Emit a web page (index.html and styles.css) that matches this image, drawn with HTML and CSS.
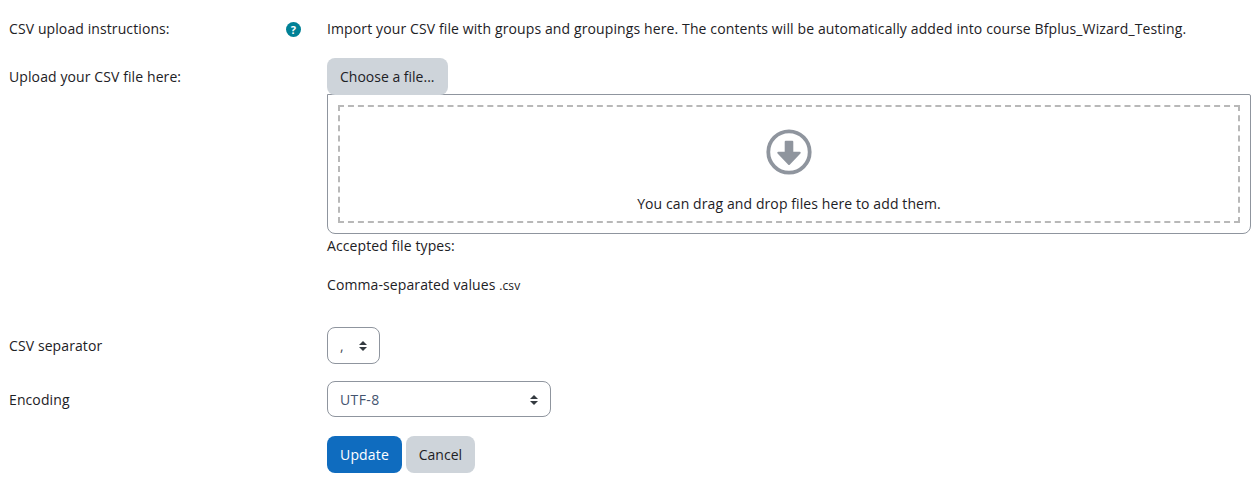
FILE: index.html
```html
<!DOCTYPE html>
<html>

<head>
    <title>Import groups</title>
    <link rel="stylesheet" href="styles.css">
</head>

<body>
    <form class="mform">
        <!-- CSV instructions -->
        <div class="form-row row-instructions">
            <div class="form-label">
                <span>CSV upload instructions:</span>
                <span class="help-icon">?</span>
            </div>
            <div class="form-field">Import your CSV file with groups and groupings here. The contents will be automatically added into course Bfplus_Wizard_Testing.</div>
        </div>

        <!-- File picker -->
        <div class="form-row row-file">
            <div class="form-label"><span>Upload your CSV file here:</span></div>
            <div class="form-field">
                <button type="button" class="btn btn-secondary">Choose a file...</button>
                <div class="dropzone">
                    <div class="dropzone-inner">
                        <svg class="drop-icon" width="46" height="46" viewBox="0 0 46 46">
                            <circle cx="23" cy="23" r="20.7" fill="none" stroke="#8f959e" stroke-width="3.8"></circle>
                            <path d="M19.7 12.7h6.6v11h7.4L23 35 12.3 23.7h7.4z" fill="#8f959e" stroke="#8f959e" stroke-width="2" stroke-linejoin="round"></path>
                        </svg>
                        <div class="drop-text">You can drag and drop files here to add them.</div>
                    </div>
                </div>
                <div class="accepted">Accepted file types:</div>
                <div class="types">Comma-separated values <small>.csv</small></div>
            </div>
        </div>

        <!-- Options -->
        <div class="form-row row-select">
            <div class="form-label"><span>CSV separator</span></div>
            <div class="form-field"><div class="select select-small">,</div></div>
        </div>
        <div class="form-row row-select">
            <div class="form-label"><span>Encoding</span></div>
            <div class="form-field"><div class="select select-wide">UTF-8</div></div>
        </div>

        <div class="form-row row-buttons">
            <div class="form-label"></div>
            <div class="form-field">
                <button type="button" class="btn btn-primary">Update</button>
                <button type="button" class="btn btn-secondary">Cancel</button>
            </div>
        </div>
    </form>
</body>

</html>
```

FILE: styles.css
```css
/* Page */
body {
    margin: 0;
    background-color: #fff;
    color: #1d2125;
    font-family: "Open Sans", "Liberation Sans", sans-serif;
    font-size: 14px;
    line-height: 21px;
    letter-spacing: 0.1px;
}
.mform {
    padding: 18px 6px 0 9px;
}

/* Form rows */
.form-row {
    display: flex;
}
.form-label {
    width: 318px;
    flex-shrink: 0;
    display: flex;
    justify-content: space-between;
    align-items: flex-start;
    padding-right: 26px;
    box-sizing: border-box;
}
.form-field {
    flex: 1;
}
.row-instructions {
    height: 40px;
}
.row-instructions .form-field {
    letter-spacing: 0.115px;
}
.row-file {
    height: 269px;
}
.row-file .form-label {
    padding-top: 8px;
}
.row-select {
    height: 54px;
}
.row-select .form-label {
    padding-top: 8px;
}
.row-buttons {
    margin-top: 1px;
}

/* Help icon */
.help-icon {
    width: 15px;
    height: 15px;
    margin-top: 4px;
    border-radius: 50%;
    background-color: #008196;
    color: #fff;
    font-size: 11px;
    font-weight: 700;
    line-height: 15px;
    text-align: center;
}

/* Buttons */
.btn {
    height: 37px;
    padding: 0 13px;
    border: 0;
    border-radius: 8px;
    font-family: inherit;
    font-size: 14px;
}
.btn-secondary {
    background-color: #ced4da;
    color: #1d2125;
}
.btn-primary {
    background-color: #0f6cbf;
    color: #fff;
    letter-spacing: 0.17px;
}

/* Drop area */
.dropzone {
    height: 140px;
    padding: 10px;
    box-sizing: border-box;
    border: 1px solid #8f959e;
    border-radius: 0 2px 8px 8px;
    margin-top: -1px;
}
.dropzone-inner {
    height: 100%;
    box-sizing: border-box;
    border: 2px dashed #b8b8b8;
    display: flex;
    flex-direction: column;
    align-items: center;
    padding-top: 22px;
}
.drop-icon {
    display: block;
}
.drop-text {
    margin-top: 18px;
}
.accepted {
    margin-top: 1px;
}
.types {
    margin-top: 18px;
}
.types small {
    font-size: 12px;
}

/* Selects */
.select {
    height: 37px;
    box-sizing: border-box;
    padding: 7px 12px;
    border: 1px solid #8f959e;
    border-radius: 8px;
    color: #495057;
    position: relative;
}
.select::before,
.select::after {
    content: "";
    position: absolute;
    right: 12px;
    border-left: 4px solid transparent;
    border-right: 4px solid transparent;
}
.select::before {
    top: 13px;
    border-bottom: 4px solid #343a40;
}
.select::after {
    top: 19px;
    border-top: 4px solid #343a40;
}
.select-small {
    width: 53px;
}
.select-wide {
    width: 224px;
    height: 36px;
    letter-spacing: 0.4px;
    color: #44546f;
}
```
